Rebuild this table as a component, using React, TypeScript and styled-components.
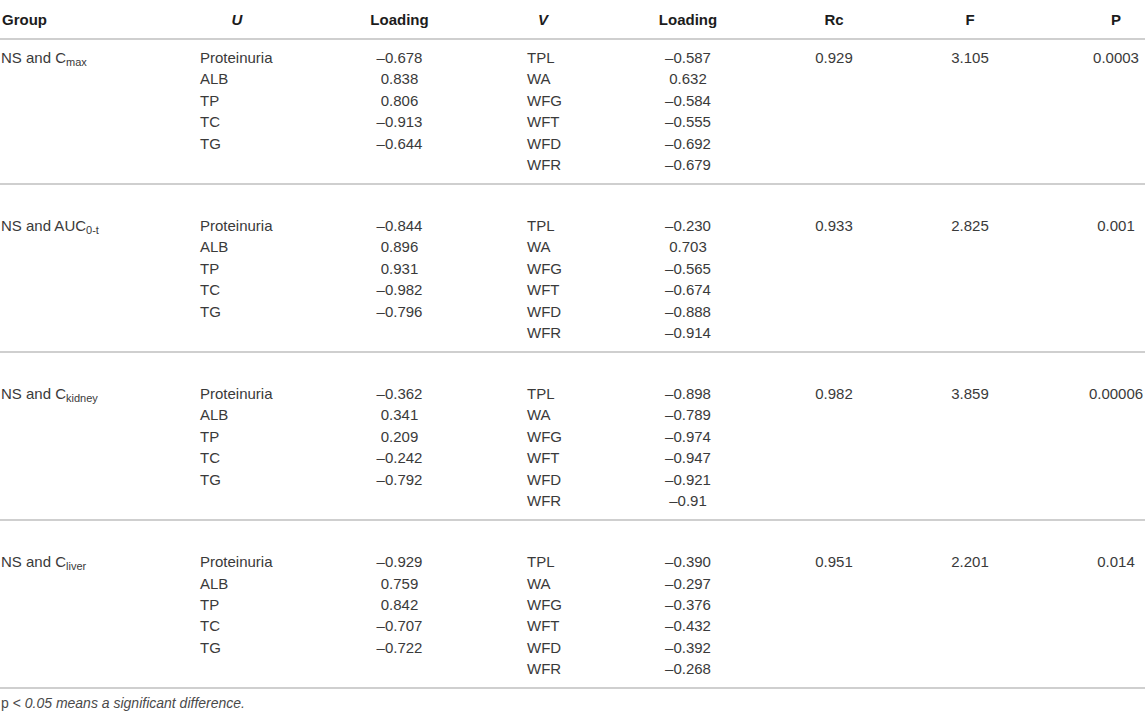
import styled, { createGlobalStyle } from 'styled-components';

type Group = {
  label: string;
  sub: string;
  u: [string, string][];
  v: [string, string][];
  rc: string;
  f: string;
  p: string;
};

const COLUMNS = '200px 74px 251px 36px 254px 38px 234px 58px';

const GROUPS: Group[] = [
  {
    label: 'NS and C',
    sub: 'max',
    u: [
      ['Proteinuria', '–0.678'],
      ['ALB', '0.838'],
      ['TP', '0.806'],
      ['TC', '–0.913'],
      ['TG', '–0.644']
    ],
    v: [
      ['TPL', '–0.587'],
      ['WA', '0.632'],
      ['WFG', '–0.584'],
      ['WFT', '–0.555'],
      ['WFD', '–0.692'],
      ['WFR', '–0.679']
    ],
    rc: '0.929',
    f: '3.105',
    p: '0.0003'
  },
  {
    label: 'NS and AUC',
    sub: '0-t',
    u: [
      ['Proteinuria', '–0.844'],
      ['ALB', '0.896'],
      ['TP', '0.931'],
      ['TC', '–0.982'],
      ['TG', '–0.796']
    ],
    v: [
      ['TPL', '–0.230'],
      ['WA', '0.703'],
      ['WFG', '–0.565'],
      ['WFT', '–0.674'],
      ['WFD', '–0.888'],
      ['WFR', '–0.914']
    ],
    rc: '0.933',
    f: '2.825',
    p: '0.001'
  },
  {
    label: 'NS and C',
    sub: 'kidney',
    u: [
      ['Proteinuria', '–0.362'],
      ['ALB', '0.341'],
      ['TP', '0.209'],
      ['TC', '–0.242'],
      ['TG', '–0.792']
    ],
    v: [
      ['TPL', '–0.898'],
      ['WA', '–0.789'],
      ['WFG', '–0.974'],
      ['WFT', '–0.947'],
      ['WFD', '–0.921'],
      ['WFR', '–0.91']
    ],
    rc: '0.982',
    f: '3.859',
    p: '0.00006'
  },
  {
    label: 'NS and C',
    sub: 'liver',
    u: [
      ['Proteinuria', '–0.929'],
      ['ALB', '0.759'],
      ['TP', '0.842'],
      ['TC', '–0.707'],
      ['TG', '–0.722']
    ],
    v: [
      ['TPL', '–0.390'],
      ['WA', '–0.297'],
      ['WFG', '–0.376'],
      ['WFT', '–0.432'],
      ['WFD', '–0.392'],
      ['WFR', '–0.268']
    ],
    rc: '0.951',
    f: '2.201',
    p: '0.014'
  }
];

const GlobalStyle = createGlobalStyle`
  html, body {
    margin: 0;
    padding: 0;
    background: #ffffff;
  }
  body {
    font-family: 'Liberation Sans', Arial, sans-serif;
    color: #3a3a3a;
  }
`;

const Table = styled.div`
  width: 1145px;
  display: flex;
  flex-direction: column;
`;

const HeaderRow = styled.div`
  display: grid;
  grid-template-columns: ${COLUMNS};
  padding: 9px 0 8px;
  border-bottom: 2px solid #cfcfcf;
  font-size: 15px;
  line-height: 21px;
  font-weight: bold;
  color: #1c1c1c;
`;

const HeadCell = styled.div<{ $left?: boolean; $italic?: boolean }>`
  text-align: ${(p) => (p.$left ? 'left' : 'center')};
  padding-left: ${(p) => (p.$left ? '2px' : '0')};
  font-style: ${(p) => (p.$italic ? 'italic' : 'normal')};
  white-space: nowrap;
`;

const GroupRow = styled.div<{ $first: boolean }>`
  display: grid;
  grid-template-columns: ${COLUMNS};
  padding: ${(p) => (p.$first ? '7px' : '30px')} 0 7.6px;
  border-bottom: 2px solid #cfcfcf;
  font-size: 15px;
  line-height: 21.4px;
`;

const Stack = styled.div<{ $align: 'left' | 'center'; $indent?: number }>`
  display: flex;
  flex-direction: column;
  align-items: ${(p) => (p.$align === 'left' ? 'flex-start' : 'center')};
  padding-left: ${(p) => p.$indent ?? 0}px;
  white-space: nowrap;
`;

const Sub = styled.sub`
  font-size: 11px;
  line-height: 0;
  vertical-align: -3px;
`;

const Footnote = styled.p`
  margin: 0;
  padding: 5px 0 0 1px;
  font-size: 14px;
  line-height: 18px;
  color: #4a4a4a;

  em {
    font-style: italic;
  }
`;

export default function App() {
  return (
    <>
      <GlobalStyle />
      <Table>
        <HeaderRow>
          <HeadCell $left>Group</HeadCell>
          <HeadCell $italic>U</HeadCell>
          <HeadCell>Loading</HeadCell>
          <HeadCell $italic>V</HeadCell>
          <HeadCell>Loading</HeadCell>
          <HeadCell>Rc</HeadCell>
          <HeadCell>F</HeadCell>
          <HeadCell>P</HeadCell>
        </HeaderRow>

        {GROUPS.map((g, i) => (
          <GroupRow key={g.label + g.sub} $first={i === 0}>
            <Stack $align="left" $indent={1}>
              <span>
                {g.label}
                <Sub>{g.sub}</Sub>
              </span>
            </Stack>
            <Stack $align="left">
              {g.u.map(([name]) => (
                <span key={name}>{name}</span>
              ))}
            </Stack>
            <Stack $align="center">
              {g.u.map(([name, val]) => (
                <span key={name}>{val}</span>
              ))}
            </Stack>
            <Stack $align="left" $indent={2}>
              {g.v.map(([name]) => (
                <span key={name}>{name}</span>
              ))}
            </Stack>
            <Stack $align="center">
              {g.v.map(([name, val]) => (
                <span key={name}>{val}</span>
              ))}
            </Stack>
            <Stack $align="center">
              <span>{g.rc}</span>
            </Stack>
            <Stack $align="center">
              <span>{g.f}</span>
            </Stack>
            <Stack $align="center">
              <span>{g.p}</span>
            </Stack>
          </GroupRow>
        ))}
      </Table>
      <Footnote>
        p &lt; <em>0.05 means a significant difference.</em>
      </Footnote>
    </>
  );
}
